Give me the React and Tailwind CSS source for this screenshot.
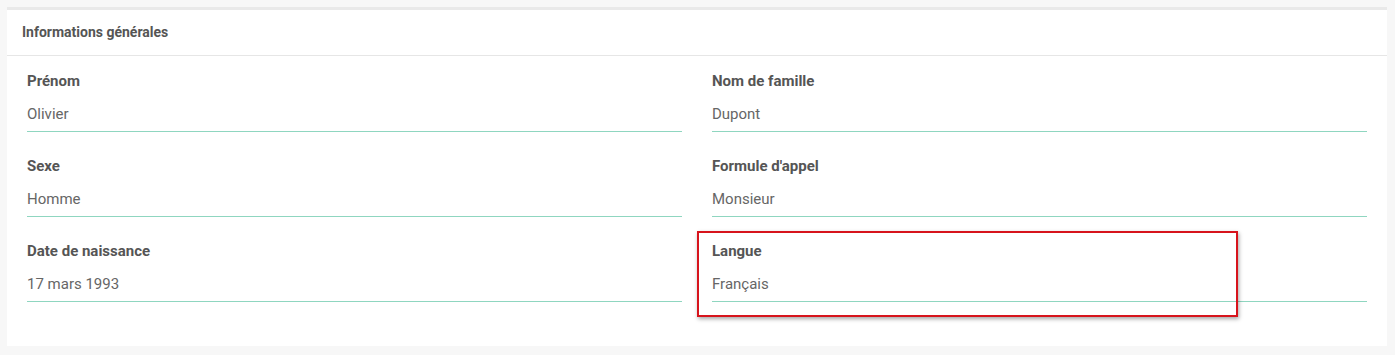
import React from 'react'

const fields = [
  { label: "Prénom", value: "Olivier" },
  { label: "Nom de famille", value: "Dupont" },
  { label: "Sexe", value: "Homme" },
  { label: "Formule d'appel", value: "Monsieur" },
  { label: "Date de naissance", value: "17 mars 1993" },
  { label: "Langue", value: "Français", highlight: true },
];

const Field = ({ label, value, highlight }) => {
  return (
    <div className="relative">
      <p className="text-[15px] leading-[20px] font-bold text-[#555]">{label}</p>
      <p className="mt-[13px] text-[15px] leading-[20px] text-[#666]">{value}</p>
      <div className="mt-[7px] h-[1px] bg-[#8fd6c0]"></div>
      {highlight && (
        <div className="absolute left-[-15px] top-[-10px] w-[541px] h-[86px] border-2 border-[#d7141c] shadow-[1px_2px_4px_rgba(0,0,0,0.35)]"></div>
      )}
    </div>
  )
}

const App = () => {
  return (
    <div className="w-[1395px] h-[355px] bg-[#f7f7f7] pt-[7px] pl-[7px]" style={{ fontFamily: "Roboto, 'Liberation Sans', sans-serif" }}>
      <div className="w-[1380px] bg-white border-t-[3px] border-[#e9e9e9]">
        <div className="h-[46px] flex items-center px-[15px] border-b border-[#e6e6e6]">
          <p className="text-[14px] font-bold text-[#555]">Informations générales</p>
        </div>
        <div className="grid grid-cols-2 gap-x-[30px] gap-y-[24px] px-[20px] pt-[15px] pb-[44px]">
          {fields.map((f) => (
            <Field key={f.label} label={f.label} value={f.value} highlight={f.highlight} />
          ))}
        </div>
      </div>
    </div>
  )
}

export default App
